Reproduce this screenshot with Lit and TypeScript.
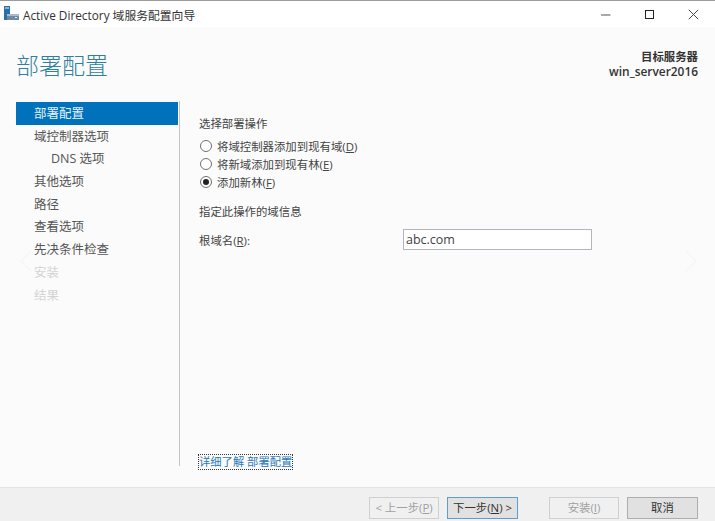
import { LitElement, html, css } from "lit";
import { customElement } from "lit/decorators.js";

@customElement("app-root")
export class AppRoot extends LitElement {
  static styles = css`
    :host {
      display: block;
      width: 715px;
      height: 521px;
      overflow: hidden;
      position: relative;
      background: #fbfbfb;
      font-family: "Open Sans", "Noto Sans CJK SC", sans-serif;
      font-size: 12px;
      color: #444;
    }

    .titlebar {
      height: 26px;
      border-top: 1px solid #9c9c9c;
      background: #fff;
      display: flex;
      align-items: center;
      padding-left: 4px;
      color: #333;
      font-size: 11.8px;
    }
    .titlebar .app-icon {
      margin-right: 4px;
    }
    .titlebar .title {
      flex: 1;
    }
    .winbtn {
      width: 44px;
      display: flex;
      justify-content: center;
      align-items: center;
    }

    .head {
      height: 74px;
      display: flex;
      justify-content: space-between;
      padding: 0 17px 0 16px;
    }
    .head h1 {
      margin: 21px 0 0;
      font-size: 23px;
      font-weight: 300;
      line-height: 34px;
      color: #2f7f9f;
    }
    .server {
      margin-top: 23px;
      text-align: right;
      font-weight: 600;
      line-height: 14px;
      color: #333;
    }
    .server .caption {
      font-size: 11.4px;
    }
    .server .name {
      font-size: 11.9px;
    }

    .body {
      display: flex;
      height: 365px;
      padding-left: 16px;
    }
    .nav {
      width: 162px;
      margin-top: 1px;
    }
    .nav div {
      height: 22.7px;
      line-height: 24.7px;
      padding-left: 18px;
      font-size: 12.5px;
      color: #555;
    }
    .nav .active {
      background: #0072bc;
      color: #e8f2f9;
    }
    .nav .sub {
      padding-left: 35px;
    }
    .nav .off {
      color: #d4d4d4;
    }
    .rule {
      width: 1px;
      margin-left: 1px;
      background: #c4c4c4;
    }
    .content {
      flex: 1;
      padding-left: 19px;
      display: flex;
      flex-direction: column;
      font-size: 11.4px;
    }
    .label {
      margin-top: 15px;
      line-height: 16px;
    }
    .radios {
      margin-top: 6px;
      display: flex;
      flex-direction: column;
      gap: 2px;
    }
    .radio {
      height: 16px;
      display: flex;
      align-items: center;
      gap: 5px;
      padding-left: 1px;
    }
    .dot {
      box-sizing: border-box;
      width: 12px;
      height: 12px;
      border: 1px solid #707070;
      border-radius: 50%;
      background: #fff;
      display: flex;
      align-items: center;
      justify-content: center;
    }
    .dot.on::after {
      content: "";
      width: 6px;
      height: 6px;
      border-radius: 50%;
      background: #222;
    }
    .info {
      margin-top: 14px;
      line-height: 16px;
    }
    .field {
      margin-top: 9px;
      display: flex;
      align-items: center;
    }
    .field label {
      width: 204px;
    }
    .field .input {
      box-sizing: border-box;
      width: 189px;
      height: 21px;
      line-height: 19px;
      padding-left: 2px;
      border: 1px solid #b4b4be;
      background: #fff;
      font-size: 12.5px;
      color: #444;
    }
    .spacer {
      flex: 1;
    }
    .link {
      align-self: flex-start;
      margin-bottom: -3px;
      line-height: 14px;
      font-size: 11.3px;
      color: #2a7ab8;
      outline: 1px dotted #333;
    }
    u {
      text-underline-offset: 1px;
    }

    .chev {
      position: absolute;
      top: 250px;
    }

    .footer {
      position: absolute;
      left: 0;
      right: 0;
      top: 487px;
      height: 34px;
      background: #f0f0f0;
      border-top: 1px solid #e4e4e4;
      display: flex;
      align-items: flex-start;
      padding: 9px 17px 0 369px;
      box-sizing: border-box;
      gap: 8px;
    }
    .btn {
      box-sizing: border-box;
      width: 71px;
      height: 22px;
      line-height: 19px;
      text-align: center;
      font-size: 11.4px;
      border: 1px solid #adadad;
      background: #e1e1e1;
      color: #333;
    }
    .btn.disabled {
      width: 70px;
      background: #f0f0f0;
      border-color: #d0d0d0;
      color: #a0a0a0;
    }
    .btn.focus {
      border-color: #5d9dcf;
    }
    .gap {
      margin-left: 23px;
    }
  `;

  render() {
    return html`
      <div class="titlebar">
        <svg class="app-icon" width="15" height="16" viewBox="0 0 15 16">
          <rect x="0" y="0" width="6" height="14" fill="#2a6fa8" />
          <rect x="1" y="1" width="4" height="2" fill="#7fb4dc" />
          <rect x="3" y="8" width="12" height="6" fill="#6f8ba3" />
          <rect x="3" y="8" width="12" height="2" fill="#a9bccb" />
          <rect x="11" y="11" width="2" height="1" fill="#e8eef3" />
        </svg>
        <span class="title">Active Directory 域服务配置向导</span>
        <div class="winbtn">
          <svg width="11" height="11" viewBox="0 0 11 11"><path d="M1 6h9.5" stroke="#555" fill="none" /></svg>
        </div>
        <div class="winbtn">
          <svg width="11" height="11" viewBox="0 0 11 11"><rect x="1.5" y="1.5" width="8" height="8" stroke="#222" fill="none" /></svg>
        </div>
        <div class="winbtn">
          <svg width="11" height="11" viewBox="0 0 11 11"><path d="M.8.8l9.4 9.4M10.2.8L.8 10.2" stroke="#444" fill="none" /></svg>
        </div>
      </div>

      <div class="head">
        <h1>部署配置</h1>
        <div class="server">
          <div class="caption">目标服务器</div>
          <div class="name">win_server2016</div>
        </div>
      </div>

      <div class="body">
        <div class="nav">
          <div class="active">部署配置</div>
          <div>域控制器选项</div>
          <div class="sub">DNS 选项</div>
          <div>其他选项</div>
          <div>路径</div>
          <div>查看选项</div>
          <div>先决条件检查</div>
          <div class="off">安装</div>
          <div class="off">结果</div>
        </div>
        <div class="rule"></div>
        <div class="content">
          <div class="label">选择部署操作</div>
          <div class="radios">
            <div class="radio"><span class="dot"></span><span>将域控制器添加到现有域(<u>D</u>)</span></div>
            <div class="radio"><span class="dot"></span><span>将新域添加到现有林(<u>E</u>)</span></div>
            <div class="radio"><span class="dot on"></span><span>添加新林(<u>F</u>)</span></div>
          </div>
          <div class="info">指定此操作的域信息</div>
          <div class="field">
            <label>根域名(<u>R</u>):</label>
            <div class="input">abc.com</div>
          </div>
          <div class="spacer"></div>
          <div class="link">详细了解 部署配置</div>
        </div>
      </div>

      <svg class="chev" style="left:19px" width="14" height="22" viewBox="0 0 14 22"><path d="M12 1L2 11l10 10" stroke="#f6f6f6" stroke-width="1.5" fill="none" /></svg>
      <svg class="chev" style="left:684px" width="14" height="22" viewBox="0 0 14 22"><path d="M2 1l10 10L2 21" stroke="#f6f6f6" stroke-width="1.5" fill="none" /></svg>

      <div class="footer">
        <div class="btn disabled">&lt; 上一步(<u>P</u>)</div>
        <div class="btn focus">下一步(<u>N</u>) &gt;</div>
        <div class="btn disabled gap">安装(<u>I</u>)</div>
        <div class="btn">取消</div>
      </div>
    `;
  }
}
